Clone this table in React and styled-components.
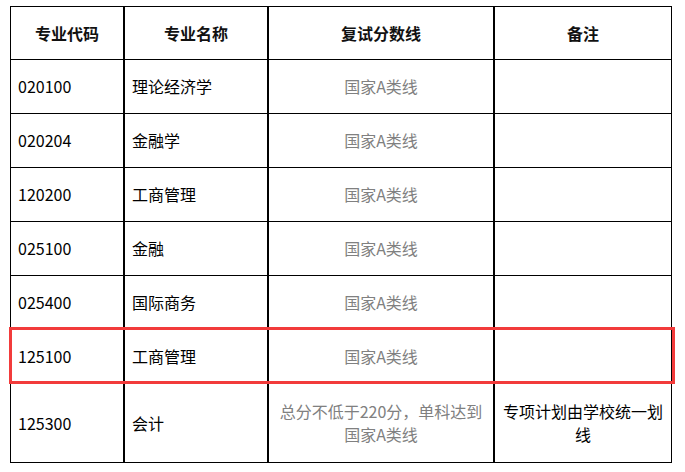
import React from 'react';
import styled, { createGlobalStyle } from 'styled-components';

const GlobalStyle = createGlobalStyle`
  html, body {
    margin: 0;
    padding: 0;
    background: #ffffff;
  }
  body {
    font-family: "Noto Sans CJK SC", "Liberation Sans", sans-serif;
    color: #000;
  }
`;

const COLS = '114px 144px 226px 177px';

const Table = styled.div`
  margin: 6px 0 0 10px;
  width: 662px;
  border-top: 1px solid #000;
  border-left: 1px solid #000;
  box-sizing: border-box;
`;

const Row = styled.div`
  position: relative;
  display: grid;
  grid-template-columns: ${COLS};
  height: ${(p) => p.$height}px;
`;

const Cell = styled.div`
  box-sizing: border-box;
  display: flex;
  align-items: center;
  justify-content: ${(p) => (p.$center ? 'center' : 'flex-start')};
  text-align: ${(p) => (p.$center ? 'center' : 'left')};
  padding: 0 7px;
  border-right: ${(p) => (p.$end ? '1px' : '2px')} solid #000;
  border-bottom: 1px solid #000;
  font-size: 16px;
  line-height: 23px;
  color: ${(p) => (p.$muted ? '#808080' : '#000')};
`;

const HeadCell = styled(Cell)`
  justify-content: center;
  font-weight: 700;
  color: #111;
`;

const Highlight = styled.div`
  position: absolute;
  left: -2px;
  top: -3px;
  width: 666px;
  height: 57px;
  box-sizing: border-box;
  border: 3px solid #f23b3b;
  pointer-events: none;
`;

const rows = [
  { code: '020100', name: '理论经济学' },
  { code: '020204', name: '金融学' },
  { code: '120200', name: '工商管理' },
  { code: '025100', name: '金融' },
  { code: '025400', name: '国际商务' },
  { code: '125100', name: '工商管理', marked: true },
];

export default function App() {
  return (
    <>
      <GlobalStyle />
      <Table>
        <Row $height={53}>
          <HeadCell>专业代码</HeadCell>
          <HeadCell>专业名称</HeadCell>
          <HeadCell>复试分数线</HeadCell>
          <HeadCell $end>备注</HeadCell>
        </Row>
        {rows.map((r) => (
          <Row key={r.code} $height={54}>
            <Cell>{r.code}</Cell>
            <Cell>{r.name}</Cell>
            <Cell $center $muted>国家A类线</Cell>
            <Cell $center $end />
            {r.marked && <Highlight />}
          </Row>
        ))}
        <Row $height={79}>
          <Cell>125300</Cell>
          <Cell>会计</Cell>
          <Cell $center $muted>
            总分不低于220分，单科达到
            <br />
            国家A类线
          </Cell>
          <Cell $center $end>
            专项计划由学校统一划
            <br />
            线
          </Cell>
        </Row>
      </Table>
    </>
  );
}
